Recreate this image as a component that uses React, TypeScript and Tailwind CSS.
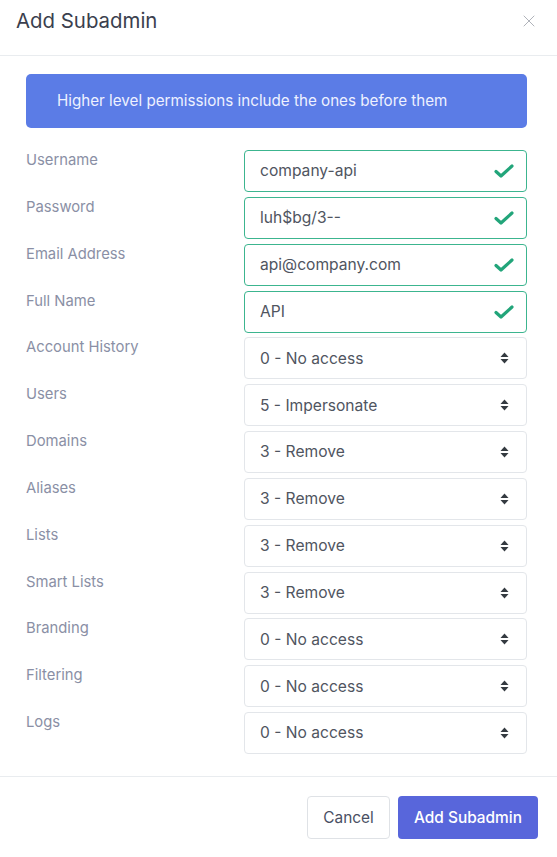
import { X } from "lucide-react";

const FONT = { fontFamily: "Inter, 'Open Sans', sans-serif" };

type Field = { label: string; value: string; kind: "text" | "select" };

const FIELDS: Field[] = [
  { label: "Username", value: "company-api", kind: "text" },
  { label: "Password", value: "luh$bg/3--", kind: "text" },
  { label: "Email Address", value: "api@company.com", kind: "text" },
  { label: "Full Name", value: "API", kind: "text" },
  { label: "Account History", value: "0 - No access", kind: "select" },
  { label: "Users", value: "5 - Impersonate", kind: "select" },
  { label: "Domains", value: "3 - Remove", kind: "select" },
  { label: "Aliases", value: "3 - Remove", kind: "select" },
  { label: "Lists", value: "3 - Remove", kind: "select" },
  { label: "Smart Lists", value: "3 - Remove", kind: "select" },
  { label: "Branding", value: "0 - No access", kind: "select" },
  { label: "Filtering", value: "0 - No access", kind: "select" },
  { label: "Logs", value: "0 - No access", kind: "select" },
];

function Check() {
  return (
    <svg width="20" height="14" viewBox="0 0 20 14" fill="none">
      <path d="M2 7.5 L7 12 L18 2" stroke="#22a57a" strokeWidth="3.2" strokeLinecap="round" strokeLinejoin="round" />
    </svg>
  );
}

function Arrows() {
  return (
    <svg width="9" height="12" viewBox="0 0 9 12">
      <path d="M4.5 0.5 L8.5 5 H0.5 Z" fill="#343a40" />
      <path d="M4.5 11.5 L8.5 7 H0.5 Z" fill="#343a40" />
    </svg>
  );
}

export default function App() {
  return (
    <div className="w-[557px] h-[857px] bg-white overflow-hidden" style={FONT}>
      <div className="h-[56px] flex items-start justify-between pl-[16px] pr-[18px] pt-[7px] border-b border-[#e9ecef]">
        <h1 className="text-[20.4px] leading-[28px] text-[#3b3f4e] font-normal">Add Subadmin</h1>
        <X className="w-[20px] h-[20px] mt-[4px] text-[#b0b3ba]" strokeWidth={1.2} />
      </div>

      <div className="pl-[26px] pr-[30px] pt-[18px] pb-[22px]">
        <div className="h-[54px] rounded-[5px] bg-[#5b7ce6] flex items-center pl-[31px] text-[15.2px] text-[#eef1ff]">
          Higher level permissions include the ones before them
        </div>

        <div className="mt-[22px] flex flex-col gap-[4.85px]">
          {FIELDS.map((f) => (
            <div key={f.label} className="flex">
              <label className="w-[218px] text-[14.8px] leading-[20px] text-[#8a8fa5]">{f.label}</label>
              <div
                className={`w-[283px] h-[42px] rounded-[4px] border flex items-center justify-between pl-[15px] text-[15.6px] text-[#50555f] ${
                  f.kind === "text" ? "border-[#3cb58f] pr-[12px]" : "border-[#e3e6ea] pr-[17px]"
                }`}
              >
                <span>{f.value}</span>
                {f.kind === "text" ? <Check /> : <Arrows />}
              </div>
            </div>
          ))}
        </div>
      </div>

      <div className="border-t border-[#e9ecef] pt-[19px] pr-[19px] flex justify-end gap-[8px]">
        <button className="w-[83px] h-[43px] rounded-[4px] border border-[#dfe2e6] bg-white text-[15.4px] text-[#4a4f63]">
          Cancel
        </button>
        <button className="w-[140px] h-[43px] rounded-[4px] bg-[#5866db] text-[15.4px] text-white font-medium">
          Add Subadmin
        </button>
      </div>
    </div>
  );
}
